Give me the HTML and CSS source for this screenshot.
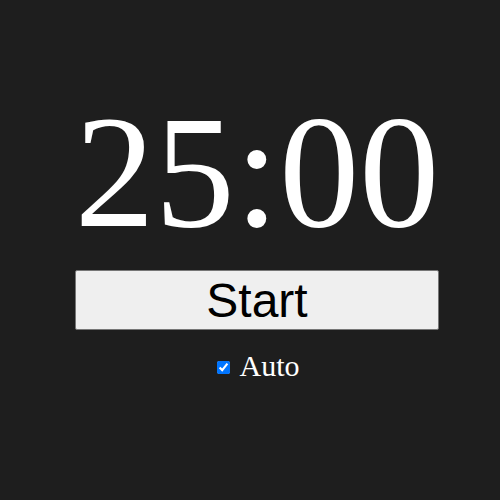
FILE: index.html
```html
<!DOCTYPE html>
<html>
<head>
<meta charset="utf-8">
<link rel="stylesheet" href="styles.css">
</head>
<body>
<main class="app">
  <div class="timer">25:00</div>
  <button class="start">Start</button>
  <label class="auto"><input type="checkbox" checked><span>Auto</span></label>
</main>
</body>
</html>
```
FILE: styles.css
```css
html, body {
  margin: 0;
  height: 100%;
}
body {
  background: #1e1e1e;
  color: #fff;
  font-family: "Liberation Serif", "Times New Roman", serif;
  display: flex;
  align-items: flex-start;
  justify-content: center;
}
.app {
  display: flex;
  flex-direction: column;
  align-items: stretch;
  margin-top: 80px;
  margin-left: 14px;
}
.timer {
  font-size: 160px;
  line-height: normal;
  text-align: center;
}
.start {
  margin-top: 5px;
  height: 60px;
  font-family: "Liberation Sans", Arial, sans-serif;
  font-size: 48px;
  color: #000;
  background: #efefef;
  border: 1px solid #767676;
  border-radius: 2px;
  padding: 0 6px;
}
.auto {
  align-self: center;
  margin-top: 19px;
  font-size: 30px;
  display: flex;
  align-items: center;
}
.auto input {
  margin: 4px 9px 2px 3px;
  width: 13px;
  height: 13px;
}
```
